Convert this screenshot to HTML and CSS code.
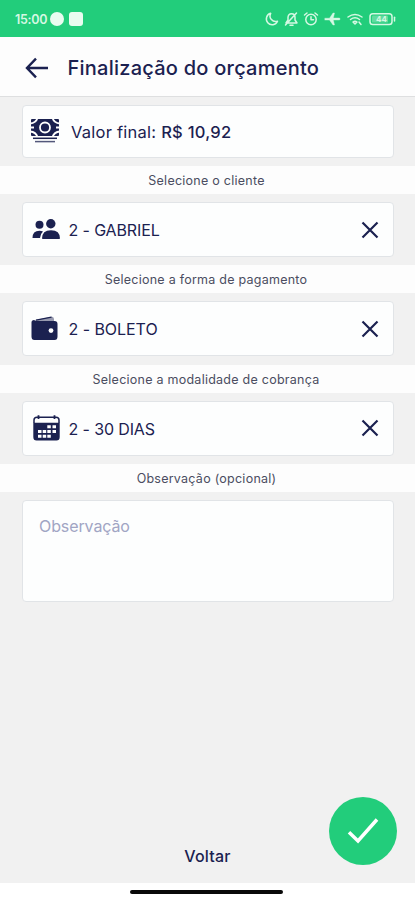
FILE: index.html
```html
<!DOCTYPE html>
<html lang="pt-BR">
<head>
<meta charset="utf-8">
<meta name="viewport" content="width=device-width, initial-scale=1">
<title>Finalização do orçamento</title>
<link rel="stylesheet" href="styles.css">
</head>
<body>
<div class="app">
  <div class="status">
    <span class="time">15:00</span><i class="dot"></i><i class="square"></i>
    <svg class="status-icons" width="134" height="18" viewBox="0 0 134 18" fill="none" stroke="currentColor" stroke-width="1.5" stroke-linecap="round" stroke-linejoin="round">
      <path d="M6.7 3.3A5.8 5.8 0 1 0 13.5 11.2A5.6 5.6 0 0 1 6.7 3.3Z"/>
      <path d="M22 13L24 10V7.5C24 5 25.4 3.8 27.5 3.8S31 5 31 7.5V10L33 13ZM26 15.3H29M32.5 3L21.5 15"/>
      <circle cx="47" cy="9.5" r="5.2"/><path d="M47 6.8V9.7H49.5M40.5 5L43 3M51 3L53.5 5"/>
      <path d="M61 8.2H65.5L69 3H70.5L69.3 8H75C76.5 8 76.5 10 75 10H69.3L70.5 15H69L65.5 10H61Z" fill="currentColor" stroke-width=".4"/>
      <path d="M84 7Q91 1.8 98 7M86.5 9.5Q91 6.2 95.5 9.5M89 12Q91 10.5 93 12L91 14ZM95 12L97 14.5"/>
      <rect x="106" y="3.7" width="22" height="10.8" rx="2.8"/><rect x="108" y="5.6" width="16" height="7" rx="1.2" fill="currentColor" stroke="none" opacity=".35"/><path d="M130.5 7.3V11"/>
      <text x="117.5" y="12.2" class="battery">44</text>
    </svg>
  </div>
  <header class="header">
    <svg class="back" width="24" height="22" viewBox="0 0 24 22"><path d="M11 1.7L2 11L11 20.3M2.5 11H23" fill="none" stroke="currentColor" stroke-width="2.4"/></svg>
    <h1>Finalização do orçamento</h1>
  </header>
  <main>
    <div class="card total">
      <svg class="icon" width="30" height="26" viewBox="0 0 30 26">
        <rect x="1" y="1" width="28" height="17" rx="1" fill="currentColor"/>
        <g fill="none" stroke="#fff" stroke-width="1.8"><circle cx="15" cy="9.5" r="5"/><path d="M0 5.5Q6 5 7.5 0M30 5.5Q24 5 22.5 0M0 13.5Q6 14 7.5 19M30 13.5Q24 14 22.5 19M1 9.5H4M26 9.5H29"/></g>
        <path d="M3 20.3H27" stroke="currentColor" stroke-width="1.5"/><path d="M5 23.6H25" stroke="currentColor" stroke-width="1.5" opacity=".75"/>
      </svg>
      <span class="value">Valor final: <b>R$ 10,92</b></span>
    </div>
    <h2>Selecione o cliente</h2>
    <div class="card">
      <svg class="icon" width="30" height="26" viewBox="0 0 30 26" fill="currentColor">
        <circle cx="8.5" cy="7.8" r="4"/><circle cx="19.8" cy="6.8" r="4.7"/><path d="M1.5 21Q1.5 13.8 8.5 13.8Q10.5 13.8 12 14.5Q9.5 16.5 9 21ZM11 21.6Q11 13.2 20 13.2T29 21.6Q29 22 28 22H12Q11 22 11 21.6Z"/>
      </svg>
      <span class="name">2 - GABRIEL</span>
      <svg class="clear" width="18" height="18" viewBox="0 0 18 18"><path d="M1.5 1.5L16.5 16.5M16.5 1.5L1.5 16.5"/></svg>
    </div>
    <h2 class="payment">Selecione a forma de pagamento</h2>
    <div class="card">
      <svg class="icon" width="30" height="26" viewBox="0 0 30 26">
        <path d="M4 4L20.5 .8Q22.5 .5 23 2.8V5.5H4Z" fill="currentColor" opacity=".45"/><path d="M5 4.2L20.5 1.2" stroke="currentColor" stroke-width="1.2"/>
        <path d="M.5 6.5Q.5 3.5 4 4L3.5 5H23.5Q26.5 5 26.5 8V20.5Q26.5 24 23.5 24H3.5Q.5 24 .5 20.5Z" fill="currentColor"/><circle cx="20" cy="14.6" r="2.4" fill="#fff"/>
      </svg>
      <span class="name boleto">2 - BOLETO</span>
      <svg class="clear" width="18" height="18" viewBox="0 0 18 18"><path d="M1.5 1.5L16.5 16.5M16.5 1.5L1.5 16.5"/></svg>
    </div>
    <h2 class="mode">Selecione a modalidade de cobrança</h2>
    <div class="card">
      <svg class="icon" width="30" height="26" viewBox="0 0 30 26">
        <path d="M3 8V5Q3 2.2 6 2.2H25Q28 2.2 28 5V8" fill="none" stroke="currentColor" stroke-width="1.5"/><path d="M2.3 7.8H28.7V22Q28.7 25.5 25.5 25.5H5.5Q2.3 25.5 2.3 22Z" fill="currentColor"/>
        <path d="M7.5.3V4M23.5.3V4" stroke="currentColor" stroke-width="1.8"/>
        <path d="M16.3 10.2h3.5v3h-3.5zM21.5 10.2H25v3h-3.5zM7 15h3.5v3H7zM11.7 15h3.5v3h-3.5zM16.3 15h3.5v3h-3.5zM21.5 15H25v3h-3.5zM7 19.8h3.5v3H7zM11.7 19.8h3.5v3h-3.5zM16.3 19.8h3.5v3h-3.5z" fill="#fff"/>
      </svg>
      <span class="name days">2 - 30 DIAS</span>
      <svg class="clear" width="18" height="18" viewBox="0 0 18 18"><path d="M1.5 1.5L16.5 16.5M16.5 1.5L1.5 16.5"/></svg>
    </div>
    <h2 class="note">Observação (opcional)</h2>
    <div class="card notes">Observação</div>
  </main>
  <footer><span>Voltar</span></footer>
  <div class="home"><i></i></div>
  <div class="confirm"><svg width="34" height="30" viewBox="0 0 34 30"><path d="M3 16.3L12 25L31 3.5" fill="none" stroke="#fff" stroke-width="3.5"/></svg></div>
</div>
</body>
</html>
```
FILE: styles.css
```css
* { box-sizing: border-box; }
body { margin: 0; background: #fff; color: #1b2150; font-family: Inter, "Liberation Sans", sans-serif; }
.app { position: relative; height: 900px; display: flex; flex-direction: column; overflow: hidden; background: #f1f1f1; }
.status { height: 37px; flex: none; display: flex; align-items: center; padding: 1px 17px 0 15px; background: #22cd7b; color: #d5f8e3; }
.time { width: 34px; font-size: 12.5px; font-weight: 600; letter-spacing: -.3px; }
.dot { width: 14px; height: 14px; margin-left: 1px; border-radius: 50%; background: #e9fcf0; }
.square { width: 14px; height: 14px; margin-left: 5px; border-radius: 3px; background: #e9fcf0; }
.status-icons { margin-left: auto; }
.battery { font-size: 8px; font-weight: 700; fill: currentColor; stroke: none; text-anchor: middle; }
.header { height: 60px; flex: none; display: flex; align-items: center; padding: 2px 26px 0 25px; background: #fdfdfd; border-bottom: 1px solid #dedfe0; }
.back { margin-right: 18.5px; flex: none; }
h1 { margin: 0; font-size: 20px; line-height: 26px; font-weight: 500; white-space: nowrap; letter-spacing: .24px; }
main { display: flex; flex-direction: column; padding-top: 7.8px; }
.card { height: 55px; margin: 8.1px 21px 8.2px 21.5px; display: flex; align-items: center; padding: 0 14px 0 8px; background: #fdfefe; border: 1px solid #e1e4e7; border-radius: 4px; }
.card.total { height: 53px; margin-top: 0; padding-left: 7px; }
.icon { flex: none; }
.value { margin: 1px 0 0 11.5px; font-size: 16.5px; letter-spacing: .24px; }
.value b { font-weight: 500; }
.name { margin: 1px 0 0 8px; font-size: 16px; letter-spacing: -.12px; }
.boleto { letter-spacing: -.05px; }
.clear { margin-left: auto; fill: none; stroke: currentColor; stroke-width: 2.2; }
h2 { height: 28px; margin: 0; background: #fdfdfd; color: #4b4d61; font-size: 12.5px; line-height: 29px; font-weight: 400; text-align: center; white-space: nowrap; letter-spacing: .25px; }
.total + h2 { padding-right: 2px; }
.payment, .mode { padding-right: 3px; }
.note { padding-right: 2px; }
.notes { height: 102px; align-items: flex-start; padding: 15px 16.5px; color: #a1a5c4; font-size: 16px; letter-spacing: -.1px; }
footer { height: 53px; margin-top: auto; text-align: center; font-size: 16px; line-height: 52px; font-weight: 500; letter-spacing: .2px; }
.home { height: 17px; flex: none; display: flex; justify-content: center; padding-top: 7px; background: #fff; }
.home i { width: 153px; height: 4px; margin-right: 2px; border-radius: 2px; background: #090909; }
.confirm { position: absolute; right: 18px; bottom: 35px; width: 68px; height: 68px; border-radius: 50%; background: #22cd7b; display: flex; align-items: center; justify-content: center; }
```
